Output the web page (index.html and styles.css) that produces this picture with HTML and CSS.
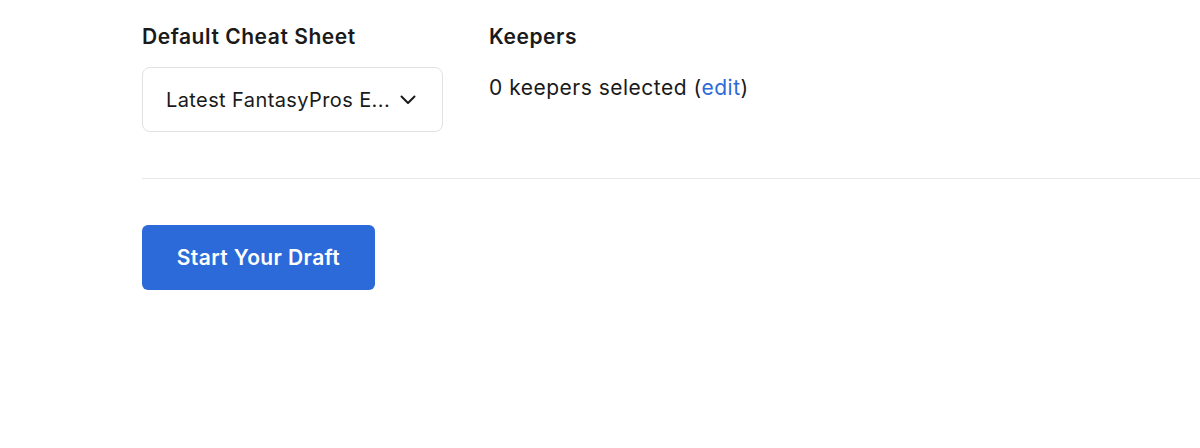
FILE: index.html
```html
<!DOCTYPE html>
<html>
<head>
<meta charset="utf-8">
<link rel="stylesheet" href="styles.css">
</head>
<body>
<div class="page">
  <div class="settings">
    <div class="col col-sheet">
      <div class="label">Default Cheat Sheet</div>
      <div class="select">
        <span class="select-text">Latest FantasyPros E...</span>
        <svg class="chev" width="16" height="10" viewBox="0 0 16 10"><polyline points="1.5,1.5 8,8 14.5,1.5" fill="none" stroke="#1a1a1a" stroke-width="2" stroke-linecap="round" stroke-linejoin="round"/></svg>
      </div>
    </div>
    <div class="col">
      <div class="label">Keepers</div>
      <div class="keepers">0 keepers selected (<a class="link">edit</a>)</div>
    </div>
  </div>
  <div class="divider"></div>
  <button class="start">Start Your Draft</button>
</div>
</body>
</html>
```
FILE: styles.css
```css
html, body {
  margin: 0;
  padding: 0;
  background: #ffffff;
}
body {
  font-family: Inter, "Noto Sans", sans-serif;
  color: #1a1a1a;
  letter-spacing: 0.4px;
}
.page {
  padding: 22px 0 0 142px;
}
.settings {
  display: flex;
  gap: 46px;
}
.col-sheet {
  width: 301px;
}
.label {
  font-size: 21px;
  line-height: 30px;
  font-weight: 600;
  letter-spacing: 0.55px;
  color: #1a1a1a;
}
.select {
  margin-top: 15px;
  box-sizing: border-box;
  height: 65px;
  border: 1px solid #e2e2e4;
  border-radius: 8px;
  display: flex;
  align-items: center;
  justify-content: space-between;
  padding: 0 26px 0 23px;
}
.select-text {
  font-size: 20px;
  color: #1a1a1a;
  white-space: nowrap;
}
.chev {
  display: block;
}
.keepers {
  margin-top: 21px;
  font-size: 21px;
  line-height: 30px;
  letter-spacing: 0.5px;
}
.link {
  color: #2d6ad9;
  text-decoration: none;
}
.divider {
  margin-top: 46px;
  height: 1px;
  background: #e8e8ea;
}
.start {
  display: block;
  margin-top: 46px;
  width: 233px;
  height: 65px;
  border: 0;
  border-radius: 6px;
  background: #2d6ad9;
  color: #ffffff;
  font-family: inherit;
  font-size: 21px;
  font-weight: 600;
  letter-spacing: 0.4px;
  padding: 0;
}
```
